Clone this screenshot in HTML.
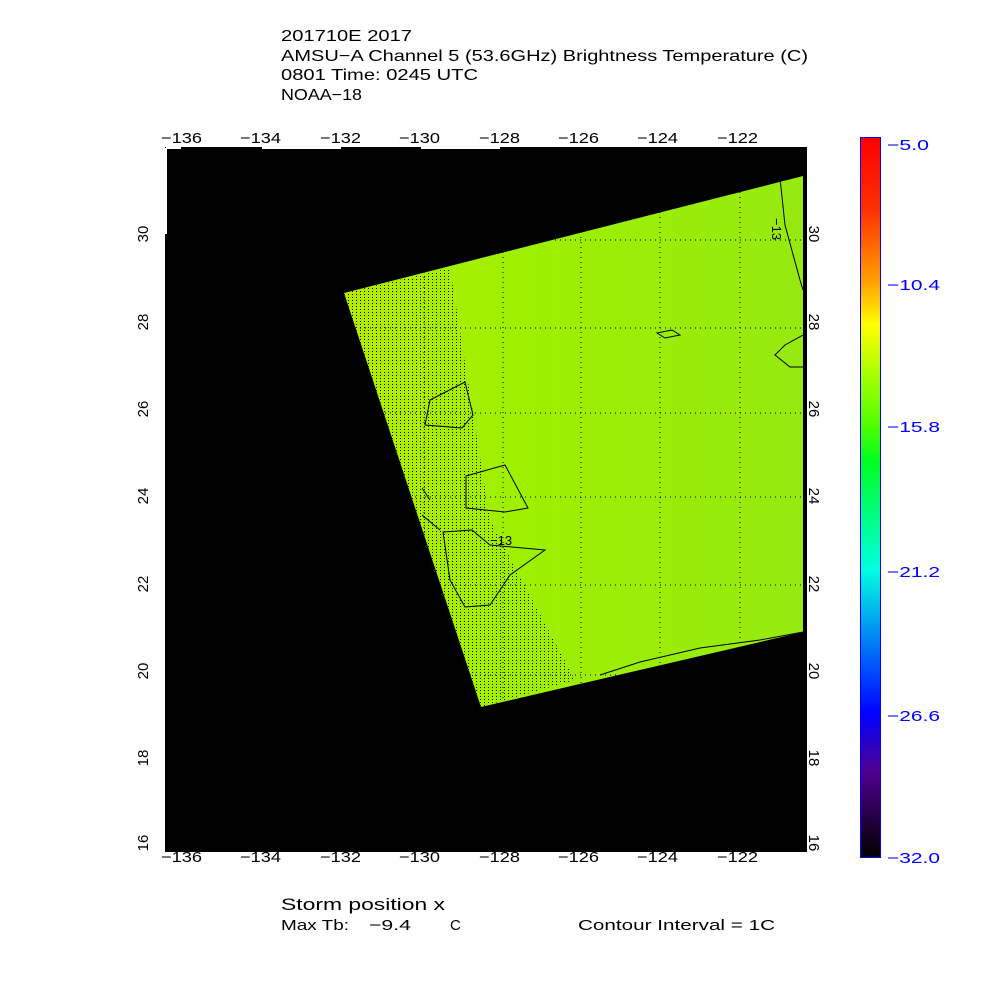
<!DOCTYPE html>
<html><head><style>
html,body{margin:0;padding:0;background:#fff;width:1000px;height:1000px;overflow:hidden}
svg text{font-family:"Liberation Sans",sans-serif}
</style></head><body>
<svg width="1000" height="1000" viewBox="0 0 1000 1000" xmlns="http://www.w3.org/2000/svg">
<defs>
<linearGradient id="cb" x1="0" y1="0" x2="0" y2="1">
<stop offset="0" stop-color="#ff0000"/>
<stop offset="0.1" stop-color="#ff3000"/>
<stop offset="0.2" stop-color="#ffa000"/>
<stop offset="0.26" stop-color="#ffff00"/>
<stop offset="0.4" stop-color="#50ff00"/>
<stop offset="0.45" stop-color="#00ff20"/>
<stop offset="0.6" stop-color="#00ffe0"/>
<stop offset="0.75" stop-color="#0040ff"/>
<stop offset="0.8" stop-color="#0000ff"/>
<stop offset="0.88" stop-color="#500090"/>
<stop offset="1" stop-color="#000000"/>
</linearGradient>
<linearGradient id="fg" x1="0" y1="0" x2="1" y2="0">
<stop offset="0" stop-color="#b4ec00"/>
<stop offset="0.35" stop-color="#9ef000"/>
<stop offset="1" stop-color="#96ea10"/>
</linearGradient>
<pattern id="dots" width="4" height="3" patternUnits="userSpaceOnUse">
<rect x="0" y="0" width="1" height="1" fill="#000"/>
</pattern>
<clipPath id="strip"><polygon points="344,293 450,268 490,520 575,680 481,707"/></clipPath>
<clipPath id="poly"><polygon points="344,293 803,176 803,632 481,707"/></clipPath>
</defs>

<text x="281" y="41" font-size="16" textLength="131" lengthAdjust="spacingAndGlyphs">201710E 2017</text>
<text x="281" y="61" font-size="16" textLength="527" lengthAdjust="spacingAndGlyphs">AMSU−A Channel 5 (53.6GHz) Brightness Temperature (C)</text>
<text x="281" y="80" font-size="16" textLength="197" lengthAdjust="spacingAndGlyphs">0801 Time: 0245 UTC</text>
<text x="281" y="100" font-size="16" textLength="81" lengthAdjust="spacingAndGlyphs">NOAA−18</text>

<rect x="165" y="147" width="642" height="705" fill="#000"/>
<g stroke="#fff" stroke-width="2">
<line x1="166" y1="148" x2="181" y2="148"/><line x1="262" y1="148" x2="341" y2="148"/>
<line x1="421" y1="148" x2="500" y2="148"/>
<line x1="166" y1="148" x2="166" y2="234"/>
</g>
<polygon points="344,293 803,176 803,632 481,707" fill="url(#fg)"/>
<g clip-path="url(#poly)">
<rect x="340" y="250" width="240" height="470" fill="url(#dots)" clip-path="url(#strip)"/>
<g stroke="#000" stroke-width="1" stroke-dasharray="1,4">
<line x1="503" y1="147" x2="503" y2="852"/><line x1="581" y1="147" x2="581" y2="852"/>
<line x1="660" y1="147" x2="660" y2="852"/><line x1="740" y1="147" x2="740" y2="852"/>
<line x1="424" y1="147" x2="424" y2="852"/>
<line x1="165" y1="240" x2="807" y2="240"/><line x1="165" y1="328" x2="807" y2="328"/>
<line x1="165" y1="413" x2="807" y2="413"/><line x1="165" y1="497" x2="807" y2="497"/>
<line x1="165" y1="585" x2="807" y2="585"/><line x1="165" y1="675" x2="807" y2="675"/>
</g>
<g fill="none" stroke="#000" stroke-width="1">
<path d="M425,425 L430,400 L465,382 L473,415 L462,428 Z"/>
<path d="M466,476 L505,465 L528,508 L505,512 L466,508 Z"/>
<path d="M443,532 L472,530 L490,545 L545,550 L510,575 L500,590 L490,605 L465,607 L450,580 Z"/>
<path d="M657,333 L672,330 L680,335 L665,338 Z"/>
<path d="M803,335 L785,345 L775,355 L790,367 L803,367"/>
<path d="M780,178 L785,225 L800,280 L803,290"/>
<path d="M600,675 L640,662 L700,648 L760,640 L803,632"/>
<path d="M422,488 L430,500"/><path d="M422,515 L440,530"/>
</g>
<text x="490" y="545" font-size="13">−13</text>
<text x="772" y="218" font-size="13" transform="rotate(90 772 218)">−13</text>
</g>

<g font-size="15">
<text x="161" y="143" textLength="41" lengthAdjust="spacingAndGlyphs">−136</text><text x="240" y="143" textLength="41" lengthAdjust="spacingAndGlyphs">−134</text><text x="320" y="143" textLength="41" lengthAdjust="spacingAndGlyphs">−132</text>
<text x="399" y="143" textLength="41" lengthAdjust="spacingAndGlyphs">−130</text><text x="479" y="143" textLength="41" lengthAdjust="spacingAndGlyphs">−128</text><text x="558" y="143" textLength="41" lengthAdjust="spacingAndGlyphs">−126</text>
<text x="637" y="143" textLength="41" lengthAdjust="spacingAndGlyphs">−124</text><text x="717" y="143" textLength="41" lengthAdjust="spacingAndGlyphs">−122</text>
<text x="161" y="862" textLength="41" lengthAdjust="spacingAndGlyphs">−136</text><text x="240" y="862" textLength="41" lengthAdjust="spacingAndGlyphs">−134</text><text x="320" y="862" textLength="41" lengthAdjust="spacingAndGlyphs">−132</text>
<text x="399" y="862" textLength="41" lengthAdjust="spacingAndGlyphs">−130</text><text x="479" y="862" textLength="41" lengthAdjust="spacingAndGlyphs">−128</text><text x="558" y="862" textLength="41" lengthAdjust="spacingAndGlyphs">−126</text>
<text x="637" y="862" textLength="41" lengthAdjust="spacingAndGlyphs">−124</text><text x="717" y="862" textLength="41" lengthAdjust="spacingAndGlyphs">−122</text>
</g>
<g font-size="15">
<text transform="translate(148,234) rotate(-90)" text-anchor="middle">30</text>
<text transform="translate(148,322) rotate(-90)" text-anchor="middle">28</text>
<text transform="translate(148,409) rotate(-90)" text-anchor="middle">26</text>
<text transform="translate(148,496) rotate(-90)" text-anchor="middle">24</text>
<text transform="translate(148,584) rotate(-90)" text-anchor="middle">22</text>
<text transform="translate(148,671) rotate(-90)" text-anchor="middle">20</text>
<text transform="translate(148,758) rotate(-90)" text-anchor="middle">18</text>
<text transform="translate(148,843) rotate(-90)" text-anchor="middle">16</text>
<text transform="translate(809,234) rotate(90)" text-anchor="middle">30</text>
<text transform="translate(809,322) rotate(90)" text-anchor="middle">28</text>
<text transform="translate(809,409) rotate(90)" text-anchor="middle">26</text>
<text transform="translate(809,496) rotate(90)" text-anchor="middle">24</text>
<text transform="translate(809,584) rotate(90)" text-anchor="middle">22</text>
<text transform="translate(809,671) rotate(90)" text-anchor="middle">20</text>
<text transform="translate(809,758) rotate(90)" text-anchor="middle">18</text>
<text transform="translate(809,843) rotate(90)" text-anchor="middle">16</text>
</g>

<rect x="860.5" y="137.5" width="20" height="720" fill="url(#cb)" stroke="#0000ff" stroke-width="1"/>
<g fill="#0000ff" font-size="15">
<text x="887" y="150" textLength="42" lengthAdjust="spacingAndGlyphs">−5.0</text>
<text x="887" y="290" textLength="53" lengthAdjust="spacingAndGlyphs">−10.4</text>
<text x="887" y="432" textLength="53" lengthAdjust="spacingAndGlyphs">−15.8</text>
<text x="887" y="577" textLength="53" lengthAdjust="spacingAndGlyphs">−21.2</text>
<text x="887" y="721" textLength="53" lengthAdjust="spacingAndGlyphs">−26.6</text>
<text x="887" y="863" textLength="53" lengthAdjust="spacingAndGlyphs">−32.0</text>
</g>

<text x="281" y="910" font-size="17" textLength="164" lengthAdjust="spacingAndGlyphs">Storm position x</text>
<text x="281" y="930" font-size="15" textLength="68" lengthAdjust="spacingAndGlyphs">Max Tb:</text>
<text x="369" y="930" font-size="15" textLength="42" lengthAdjust="spacingAndGlyphs">−9.4</text>
<text x="450" y="930" font-size="15">C</text>
<text x="578" y="930" font-size="15" textLength="197" lengthAdjust="spacingAndGlyphs">Contour Interval = 1C</text>
</svg>
</body></html>
